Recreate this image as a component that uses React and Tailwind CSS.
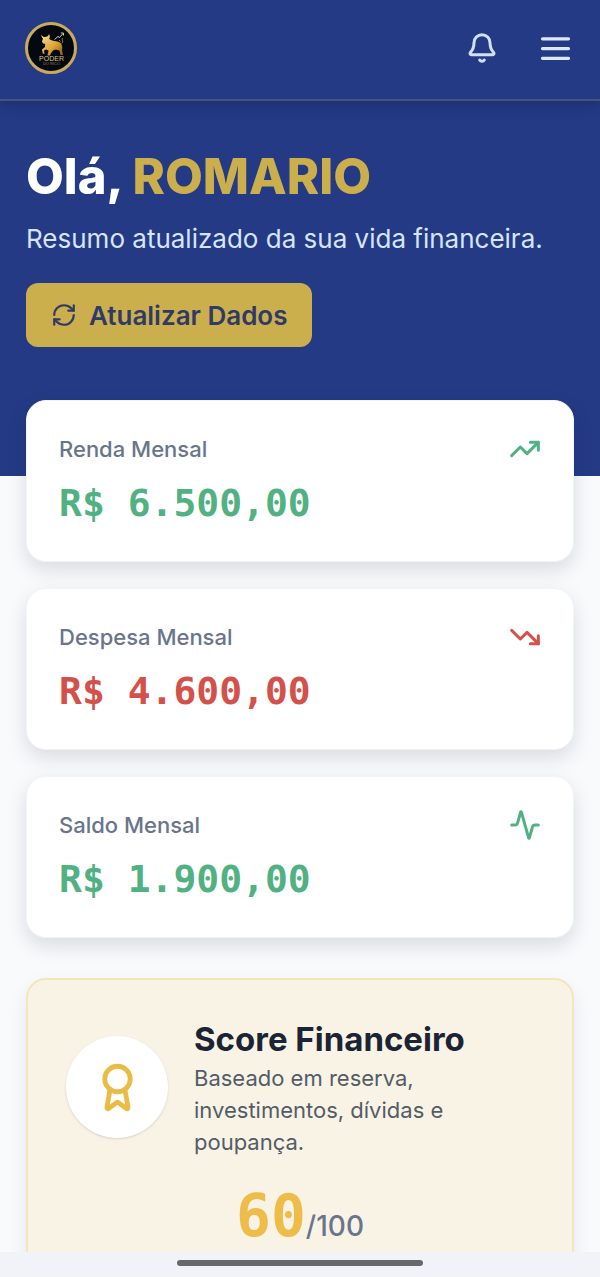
import { Activity, Award, Bell, RefreshCw, TrendingDown, TrendingUp } from 'lucide-react'

const cards = [
  { label: 'Renda Mensal',   value: 'R$ 6.500,00', icon: TrendingUp,   color: 'text-[#51b182]' },
  { label: 'Despesa Mensal', value: 'R$ 4.600,00', icon: TrendingDown, color: 'text-[#d4514b]' },
  { label: 'Saldo Mensal',   value: 'R$ 1.900,00', icon: Activity,     color: 'text-[#51b182]' },
]

function Logo() {
  return (
    <svg viewBox="0 0 52 52" className="size-13" role="img" aria-label="Poder">
      <defs>
        <linearGradient id="gold" x1="0" y1="0" x2="1" y2="1">
          <stop offset="0" stopColor="#fbe08c" />
          <stop offset="0.55" stopColor="#e0a636" />
          <stop offset="1" stopColor="#8a5415" />
        </linearGradient>
      </defs>
      <circle cx="26" cy="26" r="24.5" fill="#03090f" stroke="#c8ab5c" strokeWidth="3" />
      {/* bull */}
      <path
        d="M16.5 12.5 C17 14.5 18.5 15 20 15 C22 15 23.5 14 24 12 C25.2 14 25 15.5 24.2 17 C27 19.5 32 18.5 35 20.5 C37 22 37.8 25 37 28 L38 33 L35.5 33 L34.5 28.8 C32.5 27.5 30.5 27.8 28.5 28.2 C27 29.5 26 31 25 33.5 L22.5 33.5 C22.8 31.5 23.5 30 23.5 28.5 L21 27.5 L19 28.5 L19.5 32 L17.8 31.5 L17 27.5 L20 25 C20 23.5 20.5 22.5 20 21.8 L18 21.5 L17 19.5 L18 16.5 C16.8 15.5 16.2 14 16.5 12.5 Z"
        fill="url(#gold)"
      />
      <path d="M29.5 17.5 L33 14.5 L34.5 15.5 L38 11.5 M35.8 11 H38.5 V13.5" fill="none" stroke="#d6ccae" strokeWidth="1" />
      <path d="M36.5 21.5 C39 20 36.5 18 37.5 16 M34 18 L35.5 19.5" fill="none" stroke="#a98d4c" strokeWidth="1" />
      <text x="26.5" y="38.5" textAnchor="middle" fontSize="7" fill="#d9c28d" className="font-['Liberation_Sans',sans-serif]">PODER</text>
      <text x="26.5" y="43" textAnchor="middle" fontSize="4" fill="#94805a" className="font-['Liberation_Sans',sans-serif]">DO RICO</text>
    </svg>
  )
}

function MenuIcon() {
  return (
    <svg viewBox="0 0 24 24" className="size-[39px]" fill="none" stroke="currentColor" strokeWidth="2" strokeLinecap="round">
      <path d="M4 6h16M4 12h16M4 18h16" />
    </svg>
  )
}

function SummaryCard({ label, value, icon: Icon, color }) {
  return (
    <article className="rounded-[20px] border border-gray-100 bg-white p-8 shadow-[0_8px_20px_rgba(15,23,42,0.13)]">
      <div className="flex h-8 items-center justify-between">
        <h2 className="text-[22px] leading-8 font-medium text-[#69758a]">{label}</h2>
        <Icon size={32} strokeWidth={2.25} className={color} />
      </div>
      <p className={`mt-3 font-['DejaVu_Sans_Mono',monospace] text-[38px] leading-[52px] font-bold ${color}`}>{value}</p>
    </article>
  )
}

export default function App() {
  return (
    <div className="flex h-screen flex-col overflow-hidden bg-[#f8fafc] font-['Inter',sans-serif]">

      {/* top bar */}
      <header className="relative flex shrink-0 items-center justify-between border-b-2 border-[#43547f] bg-[#243a85] px-[25px] pt-[22px] pb-[25px] shadow-[0_4px_12px_rgba(15,23,42,0.3)]">
        <Logo />
        <div className="flex items-center gap-[38px]">
          <button aria-label="Notificações" className="text-[#d3e0fb]">
            <Bell size={32} strokeWidth={2.25} />
          </button>
          <button aria-label="Menu" className="text-[#dbe8fe]">
            <MenuIcon />
          </button>
        </div>
      </header>

      <main className="min-h-0 flex-1 overflow-hidden">
        {/* greeting */}
        <section className="bg-[#243a85] px-[26px] pt-12 pb-[129px]">
          <h1 className="text-[49px] leading-14 font-extrabold text-white">
            Olá, <span className="text-[#cbaf4d]">ROMARIO</span>
          </h1>
          <p className="mt-4 text-[26px] leading-9 text-[#d6e4fc]">Resumo atualizado da sua vida financeira.</p>
          <button className="mt-[26px] flex h-16 items-center gap-3 rounded-xl bg-[#cbaf4d] px-[25px] text-[26px] font-semibold text-[#303a68]">
            <RefreshCw size={26} />
            Atualizar Dados
          </button>
        </section>

        <div className="relative -mt-[76px] px-[26px]">
          <div className="grid gap-[26px]">
            {cards.map((card) => (
              <SummaryCard key={card.label} {...card} />
            ))}
          </div>

          {/* score */}
          <section className="mt-10 rounded-[20px] border-2 border-[#f2e6be] bg-[#f9f3e6] px-[38px] pt-9 pb-10 shadow-[0_8px_20px_rgba(15,23,42,0.08)]">
            <div className="flex items-center gap-[26px]">
              <div className="flex size-[102px] shrink-0 items-center justify-center rounded-full bg-white text-[#eabb45] shadow-sm">
                <Award size={51} strokeWidth={2.25} />
              </div>
              <div>
                <h2 className="text-[33px] leading-[46px] font-bold text-[#1b2435]">Score Financeiro</h2>
                <p className="text-[22px] leading-8 text-[#535c66]">Baseado em reserva, investimentos, dívidas e poupança.</p>
              </div>
            </div>
            <p className="mt-[26px] flex items-baseline justify-center leading-16">
              <span className="font-['DejaVu_Sans_Mono',monospace] text-[58px] font-bold text-[#eebd49]">60</span>
              <span className="text-[28px] font-medium text-[#69758a]">/100</span>
            </p>
          </section>
        </div>
      </main>

      {/* gesture bar */}
      <footer className="relative flex h-[25px] shrink-0 items-center justify-center bg-[#f1f3f8] pb-1">
        <div className="h-1.5 w-[41%] rounded-full bg-[#67686a]" />
      </footer>

    </div>
  )
}
